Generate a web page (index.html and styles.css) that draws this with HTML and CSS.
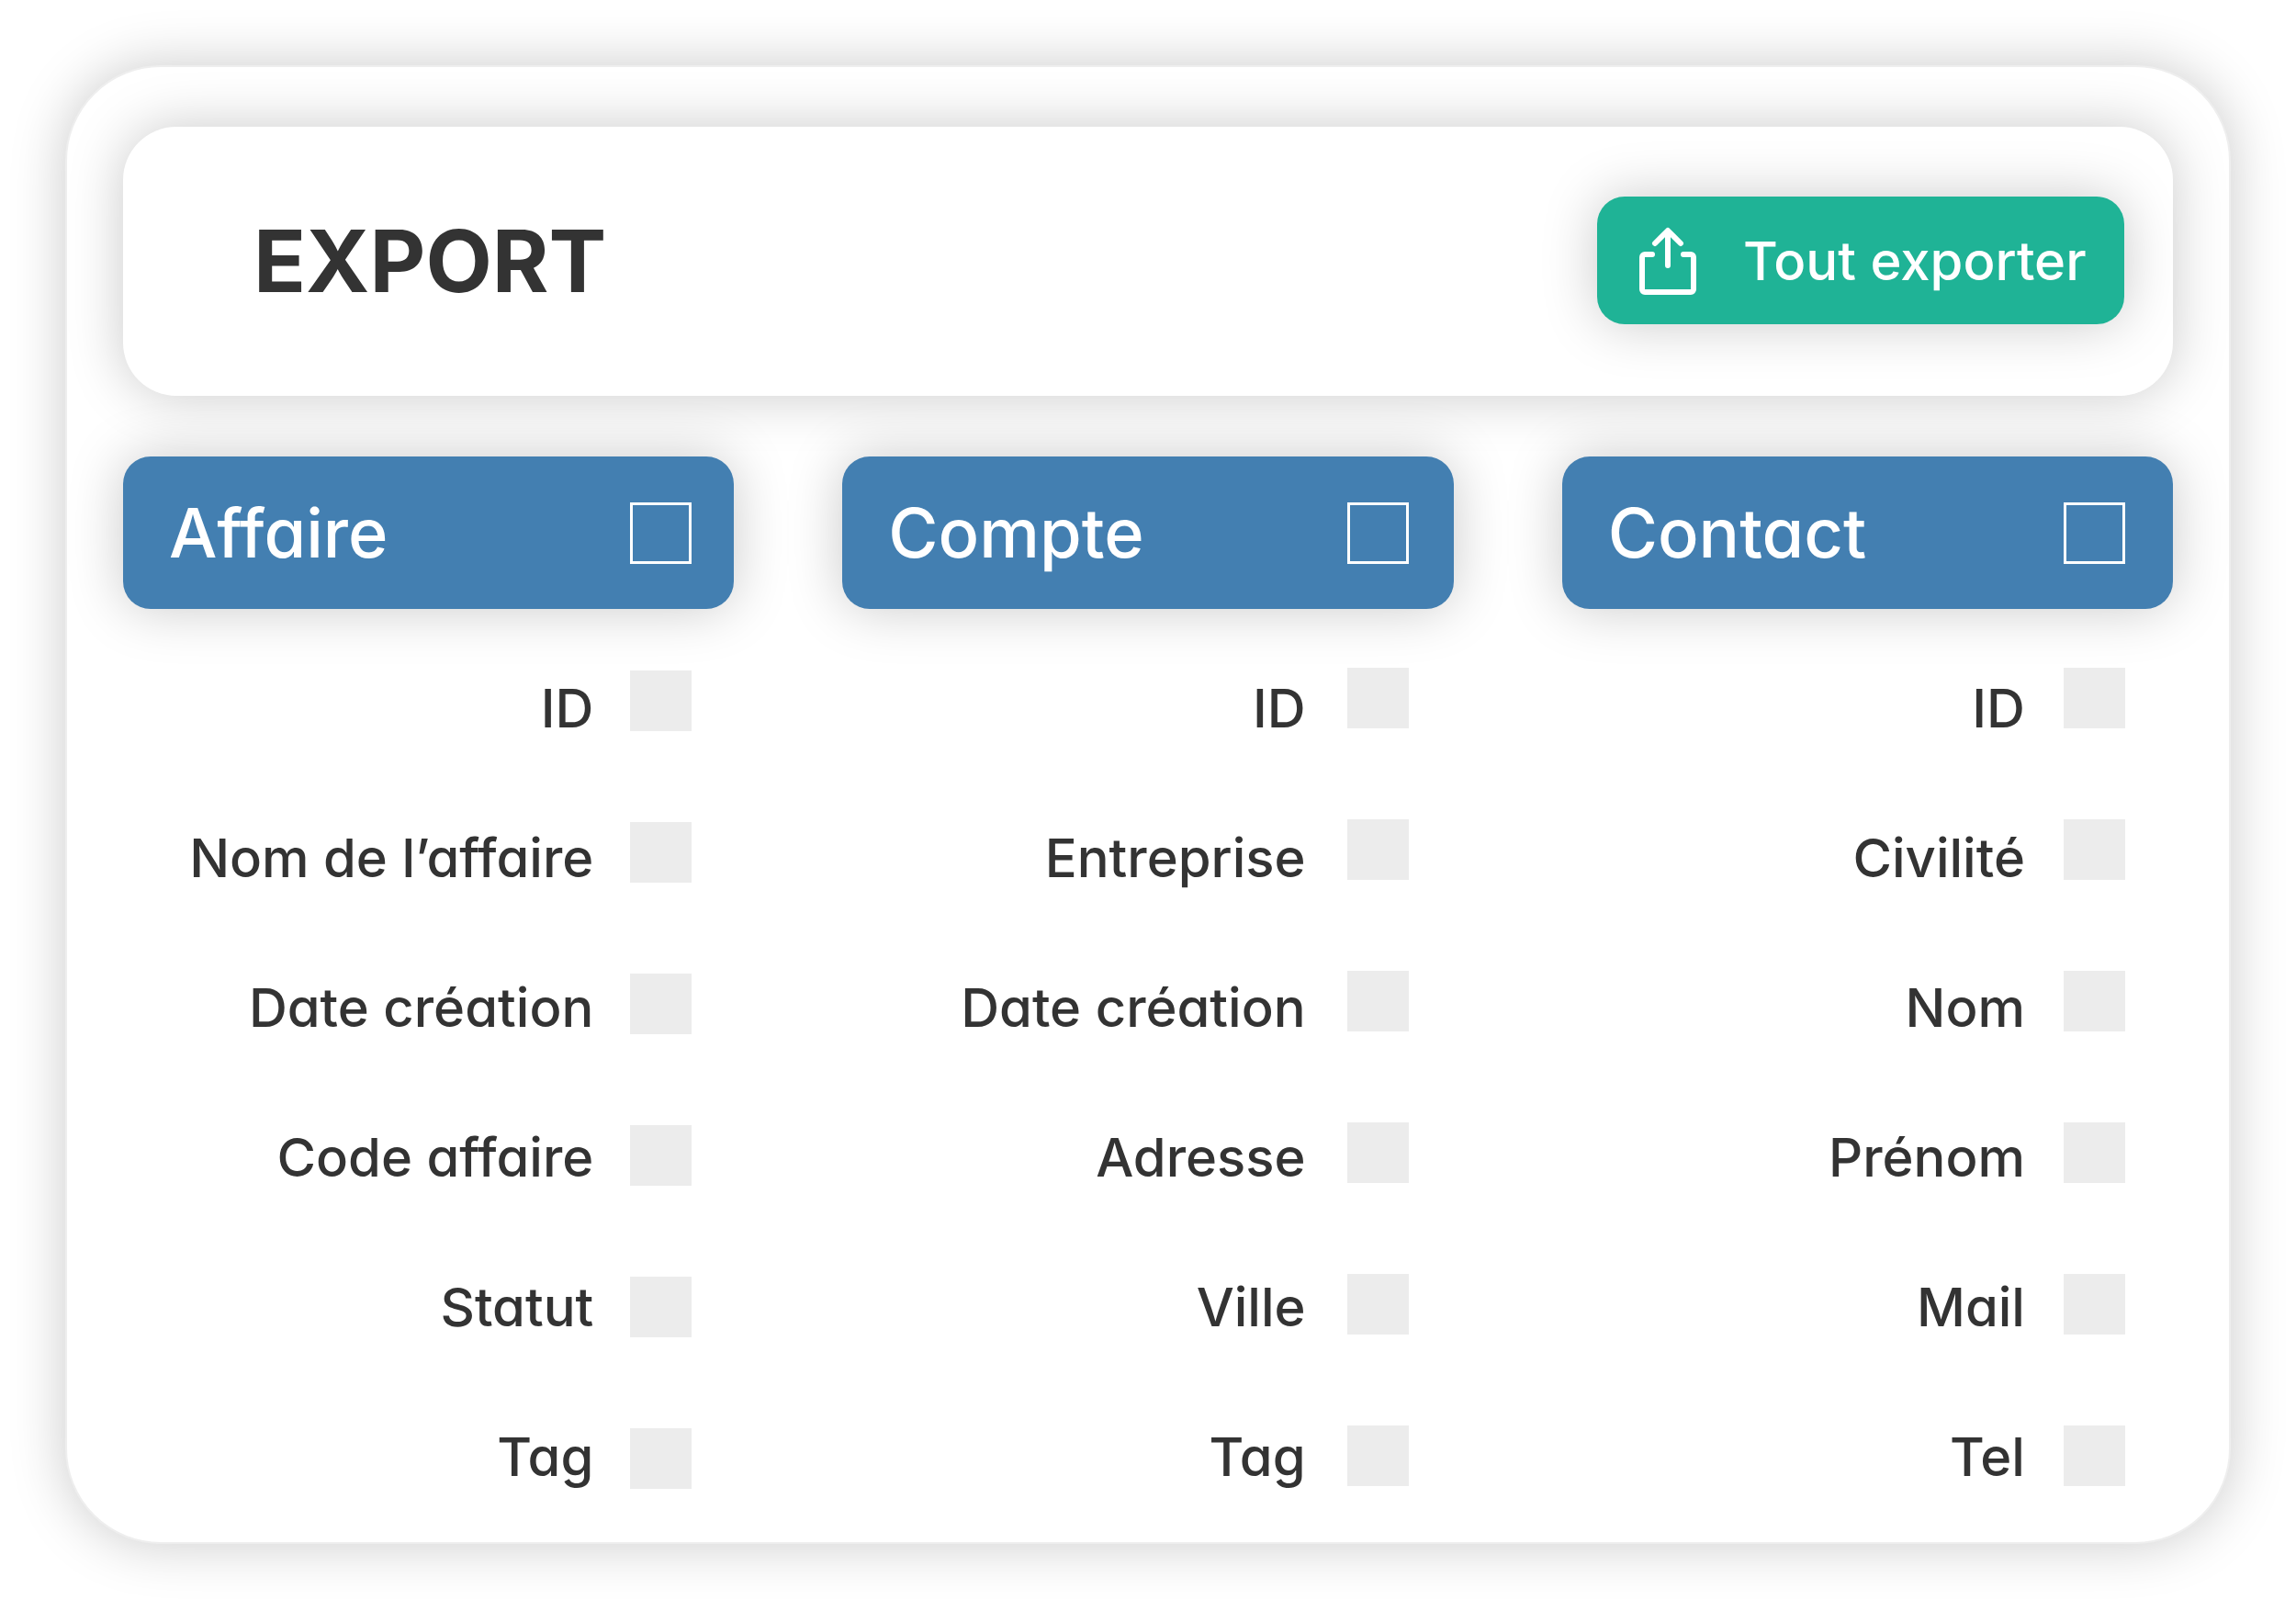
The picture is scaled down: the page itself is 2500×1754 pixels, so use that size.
FILE: index.html
```html
<!DOCTYPE html>
<html lang="fr">
<head>
<meta charset="utf-8">
<meta name="viewport" content="width=device-width, initial-scale=1">
<title>Export</title>
<link rel="stylesheet" href="styles.css">
</head>
<body>
<main class="panel">
  <header class="topbar">
    <h1 class="title">EXPORT</h1>
    <button class="export" type="button">
      <svg class="export-icon" viewBox="0 0 62 74" fill="none" stroke="currentColor" stroke-width="6" stroke-linecap="round" stroke-linejoin="round" aria-hidden="true">
        <path d="M14 30H6a3 3 0 0 0-3 3v35a3 3 0 0 0 3 3h50a3 3 0 0 0 3-3V33a3 3 0 0 0-3-3h-8"/>
        <path d="M31 42V6M17 18 31 4l14 14"/>
      </svg>
      <span>Tout exporter</span>
    </button>
  </header>

  <form class="groups">
    <section class="group group-affaire">
      <h2 class="group-head">
        <label for="affaire">Affaire</label>
        <input class="check check-all" type="checkbox" id="affaire">
      </h2>
      <div class="fields">
        <div class="names">
          <label for="affaire-id">ID</label>
          <label for="affaire-nom">Nom de l’affaire</label>
          <label for="affaire-date">Date création</label>
          <label for="affaire-code">Code affaire</label>
          <label for="affaire-statut">Statut</label>
          <label for="affaire-tag">Tag</label>
        </div>
        <div class="checks">
          <input class="check" type="checkbox" id="affaire-id">
          <input class="check" type="checkbox" id="affaire-nom">
          <input class="check" type="checkbox" id="affaire-date">
          <input class="check" type="checkbox" id="affaire-code">
          <input class="check" type="checkbox" id="affaire-statut">
          <input class="check" type="checkbox" id="affaire-tag">
        </div>
      </div>
    </section>

    <section class="group group-compte">
      <h2 class="group-head">
        <label for="compte">Compte</label>
        <input class="check check-all" type="checkbox" id="compte">
      </h2>
      <div class="fields">
        <div class="names">
          <label for="compte-id">ID</label>
          <label for="compte-entreprise">Entreprise</label>
          <label for="compte-date">Date création</label>
          <label for="compte-adresse">Adresse</label>
          <label for="compte-ville">Ville</label>
          <label for="compte-tag">Tag</label>
        </div>
        <div class="checks">
          <input class="check" type="checkbox" id="compte-id">
          <input class="check" type="checkbox" id="compte-entreprise">
          <input class="check" type="checkbox" id="compte-date">
          <input class="check" type="checkbox" id="compte-adresse">
          <input class="check" type="checkbox" id="compte-ville">
          <input class="check" type="checkbox" id="compte-tag">
        </div>
      </div>
    </section>

    <section class="group group-contact">
      <h2 class="group-head">
        <label for="contact">Contact</label>
        <input class="check check-all" type="checkbox" id="contact">
      </h2>
      <div class="fields">
        <div class="names">
          <label for="contact-id">ID</label>
          <label for="contact-civilite">Civilité</label>
          <label for="contact-nom">Nom</label>
          <label for="contact-prenom">Prénom</label>
          <label for="contact-mail">Mail</label>
          <label for="contact-tel">Tel</label>
        </div>
        <div class="checks">
          <input class="check" type="checkbox" id="contact-id">
          <input class="check" type="checkbox" id="contact-civilite">
          <input class="check" type="checkbox" id="contact-nom">
          <input class="check" type="checkbox" id="contact-prenom">
          <input class="check" type="checkbox" id="contact-mail">
          <input class="check" type="checkbox" id="contact-tel">
        </div>
      </div>
    </section>
  </form>
</main>
</body>
</html>
```
FILE: styles.css
```css
:root {
  --blue: #437fb1;
  --green: #1fb396;
  --ink: #333;
  --check: #ececec;
  --shadow: 0 0 60px rgba(0, 0, 0, .21);
}

* {
  box-sizing: border-box;
}

body {
  margin: 0;
  padding: 71px;
  background: #fff;
  color: var(--ink);
  font-family: Inter, "Liberation Sans", sans-serif;
  font-weight: 500;
  font-feature-settings: "cv11";
}

.panel {
  padding: 65px 61px 58px;
  border: 2px solid #eee;
  border-radius: 104px;
  background: #fff;
  box-shadow: var(--shadow);
}

.topbar {
  display: flex;
  align-items: center;
  justify-content: space-between;
  padding: 76px 53px 78px 142px;
  border-radius: 58px;
  background: #fff;
  box-shadow: var(--shadow);
}

.title {
  margin: 0;
  font-size: 94px;
  line-height: 120px;
  font-weight: 700;
}

.export {
  display: flex;
  align-items: center;
  gap: 51px;
  min-width: 574px;
  height: 139px;
  padding: 0 40px 0 46px;
  border: 0;
  border-radius: 30px;
  background: var(--green);
  box-shadow: var(--shadow);
  color: #fff;
  font: inherit;
  font-size: 58px;
  line-height: 64px;
  font-feature-settings: inherit;
  white-space: nowrap;
}

.export-icon {
  flex: none;
  width: 62px;
  height: 74px;
}

.groups {
  display: grid;
  grid-template-columns: repeat(3, 1fr);
  gap: 118px;
  margin-top: 66px;
}

.group {
  --edge: 46px;
  --label-gap: 40px;
  --checks-top: 67px;
}

.group-compte {
  --edge: 49px;
  --label-gap: 45px;
  --checks-top: 64px;
}

.group-contact {
  --edge: 52px;
  --label-gap: 42px;
  --checks-top: 64px;
}

.group-head {
  display: flex;
  align-items: center;
  justify-content: space-between;
  height: 166px;
  margin: 0;
  padding: 0 var(--edge) 0 50px;
  border-radius: 30px;
  background: var(--blue);
  box-shadow: var(--shadow);
  color: #fff;
  font-size: 74px;
  line-height: 80px;
  font-weight: 500;
}

.fields {
  display: flex;
  justify-content: flex-end;
  gap: var(--label-gap);
  padding-right: var(--edge);
}

.names,
.checks {
  display: flex;
  flex-direction: column;
  gap: 99px;
}

.names {
  padding-top: 76px;
  font-size: 58px;
  line-height: 64px;
  text-align: right;
  white-space: nowrap;
}

.checks {
  padding-top: var(--checks-top);
}

.check {
  appearance: none;
  flex: none;
  width: 67px;
  height: 66px;
  margin: 0;
  background: var(--check);
}

.check:checked {
  background: var(--green);
}

.check-all {
  height: 67px;
  border: 3px solid #fff;
  background: transparent;
}
```
